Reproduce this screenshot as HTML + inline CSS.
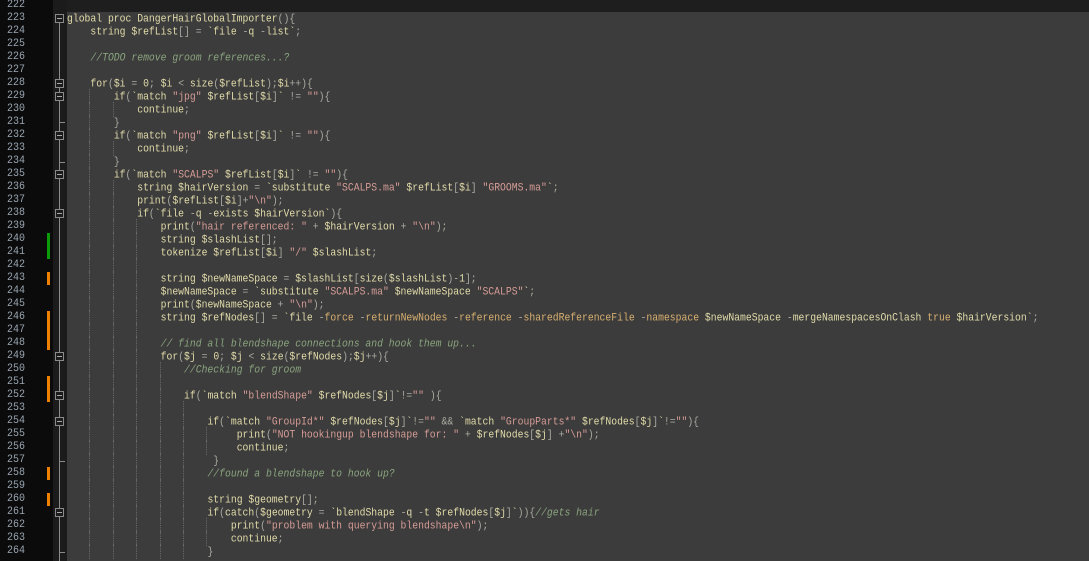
<!DOCTYPE html>
<html><head><meta charset="utf-8"><style>
html,body{margin:0;padding:0;}
body{width:1089px;height:561px;overflow:hidden;background:#3c3c3c;position:relative;font-family:"Liberation Mono",monospace;font-size:9.75px;}
#gut{position:absolute;left:0;top:0;width:53px;height:561px;background:#0b0b0b;}
#fold{position:absolute;left:53px;top:0;width:14px;height:561px;background:#1b1b1b;}
#top{position:absolute;left:67px;top:0;width:1022px;height:11.5px;background:#1e1e1e;}
.n{position:absolute;left:0;width:25px;text-align:right;color:#9aa6b2;height:13px;line-height:13px;font-size:10px;transform:scaleY(1.12);}
.l{position:absolute;left:67px;height:13px;line-height:13px;white-space:pre;color:#e2dcaa;transform:scaleY(1.15);transform-origin:0 50%;}
.g{display:inline-block;height:13px;vertical-align:top;border-left:1px dotted #6a6a6a;margin-left:-1px;}
.g0{display:inline-block;height:13px;vertical-align:top;}
.s{color:#d69c96}.c{color:#8aa47e;font-style:italic}.p{color:#ababa3}.f{color:#d8b070}
.mk{position:absolute;left:47px;width:3px;}
.bx{position:absolute;left:55px;width:7px;height:7px;border:1px solid #8a8a8a;background:#1b1b1b;}
.bx::after{content:"";position:absolute;left:1px;top:3px;width:5px;height:1px;background:#aaa;}
.tk{position:absolute;left:59px;width:6px;height:1px;background:#8a8a8a;}
</style></head><body>
<div id="gut"></div><div id="fold"></div><div id="top"></div>
<div style="position:absolute;left:59px;top:19px;width:1px;height:542px;background:#8a8a8a"></div>
<div class="bx" style="top:14px"></div>
<div class="bx" style="top:79px"></div>
<div class="bx" style="top:92px"></div>
<div class="tk" style="top:122px"></div>
<div class="bx" style="top:131px"></div>
<div class="tk" style="top:162px"></div>
<div class="bx" style="top:170px"></div>
<div class="bx" style="top:209px"></div>
<div class="bx" style="top:352px"></div>
<div class="bx" style="top:391px"></div>
<div class="bx" style="top:417px"></div>
<div class="tk" style="top:461px"></div>
<div class="bx" style="top:508px"></div>
<div class="tk" style="top:552px"></div>
<div class="mk" style="top:233px;height:26px;background:#0a9a0a"></div>
<div class="mk" style="top:272px;height:13px;background:#f08000"></div>
<div class="mk" style="top:311px;height:39px;background:#f08000"></div>
<div class="mk" style="top:376px;height:26px;background:#f08000"></div>
<div class="mk" style="top:467px;height:13px;background:#f08000"></div>
<div class="mk" style="top:493px;height:13px;background:#f08000"></div>

<div class="n" style="top:-1.5px">222</div>
<div class="n" style="top:11.5px">223</div>
<div class="n" style="top:24.5px">224</div>
<div class="n" style="top:37.5px">225</div>
<div class="n" style="top:50.5px">226</div>
<div class="n" style="top:63.5px">227</div>
<div class="n" style="top:76.5px">228</div>
<div class="n" style="top:89.5px">229</div>
<div class="n" style="top:102.5px">230</div>
<div class="n" style="top:115.5px">231</div>
<div class="n" style="top:128.5px">232</div>
<div class="n" style="top:141.5px">233</div>
<div class="n" style="top:154.5px">234</div>
<div class="n" style="top:167.5px">235</div>
<div class="n" style="top:180.5px">236</div>
<div class="n" style="top:193.5px">237</div>
<div class="n" style="top:206.5px">238</div>
<div class="n" style="top:219.5px">239</div>
<div class="n" style="top:232.5px">240</div>
<div class="n" style="top:245.5px">241</div>
<div class="n" style="top:258.5px">242</div>
<div class="n" style="top:271.5px">243</div>
<div class="n" style="top:284.5px">244</div>
<div class="n" style="top:297.5px">245</div>
<div class="n" style="top:310.5px">246</div>
<div class="n" style="top:323.5px">247</div>
<div class="n" style="top:336.5px">248</div>
<div class="n" style="top:349.5px">249</div>
<div class="n" style="top:362.5px">250</div>
<div class="n" style="top:375.5px">251</div>
<div class="n" style="top:388.5px">252</div>
<div class="n" style="top:401.5px">253</div>
<div class="n" style="top:414.5px">254</div>
<div class="n" style="top:427.5px">255</div>
<div class="n" style="top:440.5px">256</div>
<div class="n" style="top:453.5px">257</div>
<div class="n" style="top:466.5px">258</div>
<div class="n" style="top:479.5px">259</div>
<div class="n" style="top:492.5px">260</div>
<div class="n" style="top:505.5px">261</div>
<div class="n" style="top:518.5px">262</div>
<div class="n" style="top:531.5px">263</div>
<div class="n" style="top:544.5px">264</div>

<div class="l" style="top:11.5px">global proc DangerHairGlobalImporter<span class="p">(){</span></div>
<div class="l" style="top:24.5px"><span class="g0">    </span>string $refList<span class="p">[] =</span> `file <span class="p">-</span>q <span class="p">-</span>list`<span class="p">;</span></div>
<div class="l" style="top:50.5px"><span class="g0">    </span><span class="c">//TODO remove groom references...?</span></div>
<div class="l" style="top:76.5px"><span class="g0">    </span>for<span class="p">(</span>$i <span class="p">=</span> 0<span class="p">;</span> $i <span class="p">&lt;</span> size<span class="p">(</span>$refList<span class="p">);</span>$i<span class="p">++){</span></div>
<div class="l" style="top:89.5px"><span class="g0">    </span><span class="g">    </span>if<span class="p">(</span>`match <span class="s">"jpg"</span> $refList<span class="p">[</span>$i<span class="p">]</span>` <span class="p">!=</span> <span class="s">""</span><span class="p">){</span></div>
<div class="l" style="top:102.5px"><span class="g0">    </span><span class="g">    </span><span class="g">    </span>continue<span class="p">;</span></div>
<div class="l" style="top:115.5px"><span class="g0">    </span><span class="g">    </span><span class="p">}</span></div>
<div class="l" style="top:128.5px"><span class="g0">    </span><span class="g">    </span>if<span class="p">(</span>`match <span class="s">"png"</span> $refList<span class="p">[</span>$i<span class="p">]</span>` <span class="p">!=</span> <span class="s">""</span><span class="p">){</span></div>
<div class="l" style="top:141.5px"><span class="g0">    </span><span class="g">    </span><span class="g">    </span>continue<span class="p">;</span></div>
<div class="l" style="top:154.5px"><span class="g0">    </span><span class="g">    </span><span class="p">}</span></div>
<div class="l" style="top:167.5px"><span class="g0">    </span><span class="g">    </span>if<span class="p">(</span>`match <span class="s">"SCALPS"</span> $refList<span class="p">[</span>$i<span class="p">]</span>` <span class="p">!=</span> <span class="s">""</span><span class="p">){</span></div>
<div class="l" style="top:180.5px"><span class="g0">    </span><span class="g">    </span><span class="g">    </span>string $hairVersion <span class="p">=</span> `substitute <span class="s">"SCALPS.ma"</span> $refList<span class="p">[</span>$i<span class="p">]</span> <span class="s">"GROOMS.ma"</span>`<span class="p">;</span></div>
<div class="l" style="top:193.5px"><span class="g0">    </span><span class="g">    </span><span class="g">    </span>print<span class="p">(</span>$refList<span class="p">[</span>$i<span class="p">]+</span><span class="s">"\n"</span><span class="p">);</span></div>
<div class="l" style="top:206.5px"><span class="g0">    </span><span class="g">    </span><span class="g">    </span>if<span class="p">(</span>`file <span class="p">-</span>q <span class="p">-</span>exists $hairVersion`<span class="p">){</span></div>
<div class="l" style="top:219.5px"><span class="g0">    </span><span class="g">    </span><span class="g">    </span><span class="g">    </span>print<span class="p">(</span><span class="s">"hair referenced: "</span> <span class="p">+</span> $hairVersion <span class="p">+</span> <span class="s">"\n"</span><span class="p">);</span></div>
<div class="l" style="top:232.5px"><span class="g0">    </span><span class="g">    </span><span class="g">    </span><span class="g">    </span>string $slashList<span class="p">[];</span></div>
<div class="l" style="top:245.5px"><span class="g0">    </span><span class="g">    </span><span class="g">    </span><span class="g">    </span>tokenize $refList<span class="p">[</span>$i<span class="p">]</span> <span class="s">"/"</span> $slashList<span class="p">;</span></div>
<div class="l" style="top:258.5px"><span class="g0">    </span><span class="g">    </span><span class="g">    </span><span class="g">    </span></div>
<div class="l" style="top:271.5px"><span class="g0">    </span><span class="g">    </span><span class="g">    </span><span class="g">    </span>string $newNameSpace <span class="p">=</span> $slashList<span class="p">[</span>size<span class="p">(</span>$slashList<span class="p">)-</span>1<span class="p">];</span></div>
<div class="l" style="top:284.5px"><span class="g0">    </span><span class="g">    </span><span class="g">    </span><span class="g">    </span>$newNameSpace <span class="p">=</span> `substitute <span class="s">"SCALPS.ma"</span> $newNameSpace <span class="s">"SCALPS"</span>`<span class="p">;</span></div>
<div class="l" style="top:297.5px"><span class="g0">    </span><span class="g">    </span><span class="g">    </span><span class="g">    </span>print<span class="p">(</span>$newNameSpace <span class="p">+</span> <span class="s">"\n"</span><span class="p">);</span></div>
<div class="l" style="top:310.5px"><span class="g0">    </span><span class="g">    </span><span class="g">    </span><span class="g">    </span>string $refNodes<span class="p">[] =</span> `file <span class="p">-</span><span class="f">force</span> <span class="p">-</span><span class="f">returnNewNodes</span> <span class="p">-</span><span class="f">reference</span> <span class="p">-</span><span class="f">sharedReferenceFile</span> <span class="p">-</span><span class="f">namespace</span> $newNameSpace <span class="p">-</span>mergeNamespacesOnClash <span class="f">true</span> $hairVersion`<span class="p">;</span></div>
<div class="l" style="top:323.5px"><span class="g0">    </span><span class="g">    </span><span class="g">    </span><span class="g">    </span></div>
<div class="l" style="top:336.5px"><span class="g0">    </span><span class="g">    </span><span class="g">    </span><span class="g">    </span><span class="c">// find all blendshape connections and hook them up...</span></div>
<div class="l" style="top:349.5px"><span class="g0">    </span><span class="g">    </span><span class="g">    </span><span class="g">    </span>for<span class="p">(</span>$j <span class="p">=</span> 0<span class="p">;</span> $j <span class="p">&lt;</span> size<span class="p">(</span>$refNodes<span class="p">);</span>$j<span class="p">++){</span></div>
<div class="l" style="top:362.5px"><span class="g0">    </span><span class="g">    </span><span class="g">    </span><span class="g">    </span><span class="g">    </span><span class="c">//Checking for groom</span></div>
<div class="l" style="top:375.5px"><span class="g0">    </span><span class="g">    </span><span class="g">    </span><span class="g">    </span><span class="g">    </span></div>
<div class="l" style="top:388.5px"><span class="g0">    </span><span class="g">    </span><span class="g">    </span><span class="g">    </span><span class="g">    </span>if<span class="p">(</span>`match <span class="s">"blendShape"</span> $refNodes<span class="p">[</span>$j<span class="p">]</span>`<span class="p">!=</span><span class="s">""</span> <span class="p">){</span></div>
<div class="l" style="top:401.5px"><span class="g0">    </span><span class="g">    </span><span class="g">    </span><span class="g">    </span><span class="g">    </span><span class="g">    </span></div>
<div class="l" style="top:414.5px"><span class="g0">    </span><span class="g">    </span><span class="g">    </span><span class="g">    </span><span class="g">    </span><span class="g">    </span>if<span class="p">(</span>`match <span class="s">"GroupId*"</span> $refNodes<span class="p">[</span>$j<span class="p">]</span>`<span class="p">!=</span><span class="s">""</span> <span class="p">&amp;&amp;</span> `match <span class="s">"GroupParts*"</span> $refNodes<span class="p">[</span>$j<span class="p">]</span>`<span class="p">!=</span><span class="s">""</span><span class="p">){</span></div>
<div class="l" style="top:427.5px"><span class="g0">    </span><span class="g">    </span><span class="g">    </span><span class="g">    </span><span class="g">    </span><span class="g">    </span><span class="g">     </span>print<span class="p">(</span><span class="s">"NOT hookingup blendshape for: "</span> <span class="p">+</span> $refNodes<span class="p">[</span>$j<span class="p">]</span> <span class="p">+</span><span class="s">"\n"</span><span class="p">);</span></div>
<div class="l" style="top:440.5px"><span class="g0">    </span><span class="g">    </span><span class="g">    </span><span class="g">    </span><span class="g">    </span><span class="g">    </span><span class="g">     </span>continue<span class="p">;</span></div>
<div class="l" style="top:453.5px"><span class="g0">    </span><span class="g">    </span><span class="g">    </span><span class="g">    </span><span class="g">    </span><span class="g">    </span> <span class="p">}</span></div>
<div class="l" style="top:466.5px"><span class="g0">    </span><span class="g">    </span><span class="g">    </span><span class="g">    </span><span class="g">    </span><span class="g">    </span><span class="c">//found a blendshape to hook up?</span></div>
<div class="l" style="top:479.5px"><span class="g0">    </span><span class="g">    </span><span class="g">    </span><span class="g">    </span><span class="g">    </span><span class="g">    </span></div>
<div class="l" style="top:492.5px"><span class="g0">    </span><span class="g">    </span><span class="g">    </span><span class="g">    </span><span class="g">    </span><span class="g">    </span>string $geometry<span class="p">[];</span></div>
<div class="l" style="top:505.5px"><span class="g0">    </span><span class="g">    </span><span class="g">    </span><span class="g">    </span><span class="g">    </span><span class="g">    </span>if<span class="p">(</span>catch<span class="p">(</span>$geometry <span class="p">=</span> `blendShape <span class="p">-</span>q <span class="p">-</span>t $refNodes<span class="p">[</span>$j<span class="p">]</span>`<span class="p">)){</span><span class="c">//gets hair</span></div>
<div class="l" style="top:518.5px"><span class="g0">    </span><span class="g">    </span><span class="g">    </span><span class="g">    </span><span class="g">    </span><span class="g">    </span><span class="g">    </span>print<span class="p">(</span><span class="s">"problem with querying blendshape\n"</span><span class="p">);</span></div>
<div class="l" style="top:531.5px"><span class="g0">    </span><span class="g">    </span><span class="g">    </span><span class="g">    </span><span class="g">    </span><span class="g">    </span><span class="g">    </span>continue<span class="p">;</span></div>
<div class="l" style="top:544.5px"><span class="g0">    </span><span class="g">    </span><span class="g">    </span><span class="g">    </span><span class="g">    </span><span class="g">    </span><span class="p">}</span></div>
</body></html>
